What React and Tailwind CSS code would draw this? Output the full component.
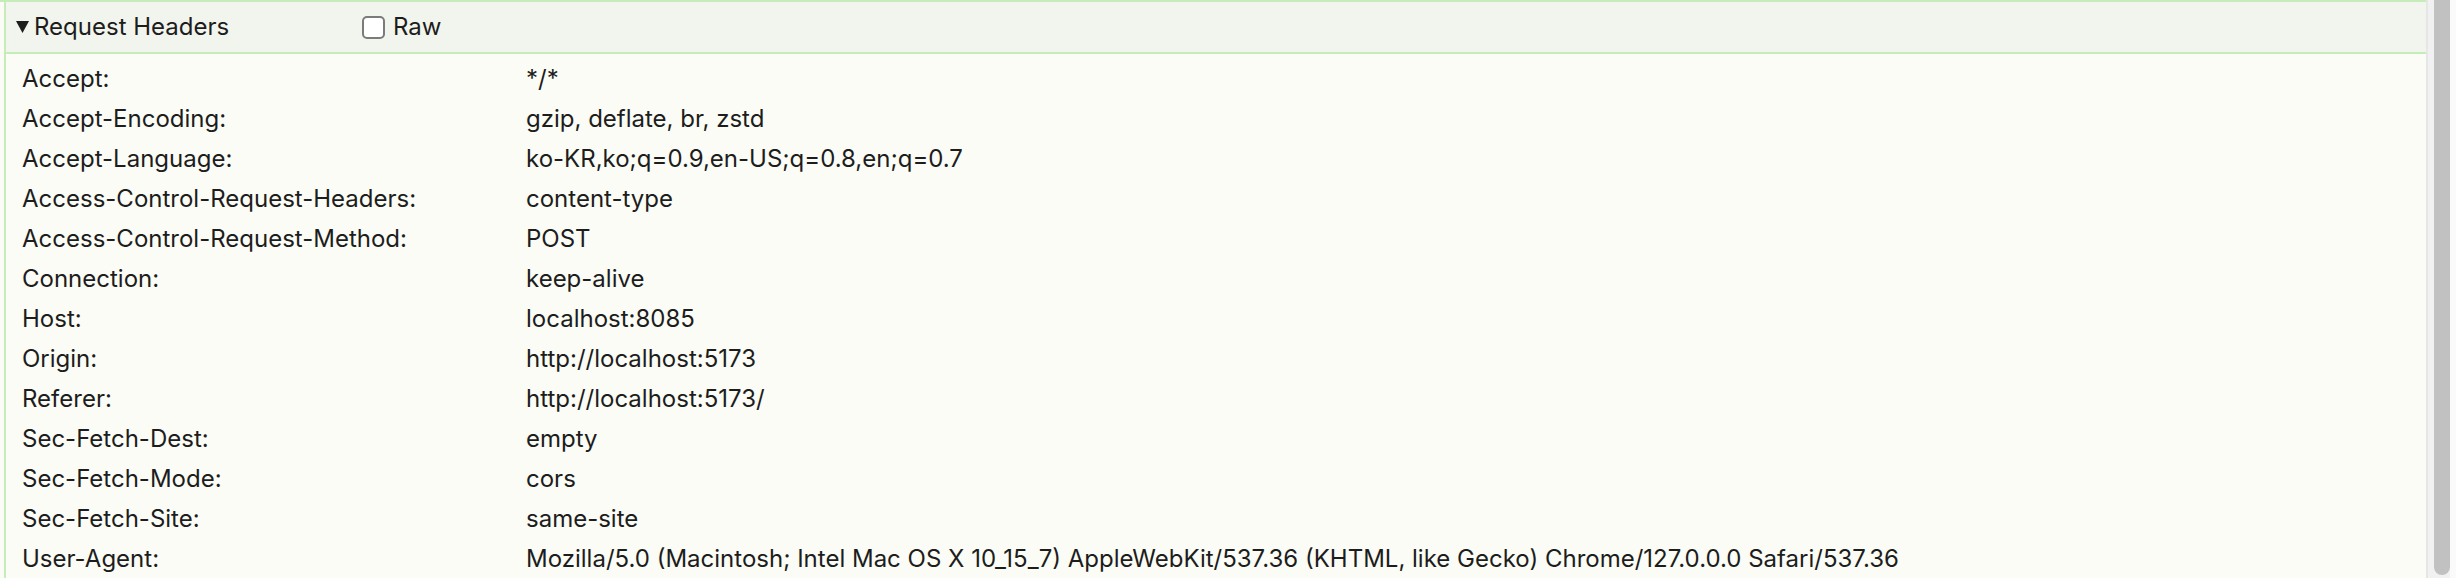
import { useState } from "react";

const HEADERS = [
  ["Accept:", "*/*"],
  ["Accept-Encoding:", "gzip, deflate, br, zstd"],
  ["Accept-Language:", "ko-KR,ko;q=0.9,en-US;q=0.8,en;q=0.7"],
  ["Access-Control-Request-Headers:", "content-type"],
  ["Access-Control-Request-Method:", "POST"],
  ["Connection:", "keep-alive"],
  ["Host:", "localhost:8085"],
  ["Origin:", "http://localhost:5173"],
  ["Referer:", "http://localhost:5173/"],
  ["Sec-Fetch-Dest:", "empty"],
  ["Sec-Fetch-Mode:", "cors"],
  ["Sec-Fetch-Site:", "same-site"],
  [
    "User-Agent:",
    "Mozilla/5.0 (Macintosh; Intel Mac OS X 10_15_7) AppleWebKit/537.36 (KHTML, like Gecko) Chrome/127.0.0.0 Safari/537.36",
  ],
];

export default function App() {
  const [raw, setRaw] = useState(false);

  return (
    <div
      className="flex h-[578px] w-full overflow-hidden bg-[#fbfcf5] text-[24px] text-[#1d1d1d]"
      style={{ fontFamily: "Inter, 'Liberation Sans', sans-serif" }}
    >
      {/* panel */}
      <div className="flex-1 border-t-2 border-[#c5ecb9] pl-[4px]">
        <div className="h-full border-l-2 border-[#c5ecb9]">
          {/* header bar */}
          <div className="flex h-[52px] items-center border-b-2 border-[#c5ecb9] bg-[#f2f5ed] pl-[10px]">
            <svg width="13" height="12" viewBox="0 0 13 12" className="mr-[5px]">
              <path d="M0 0 H13 L6.5 12 Z" fill="#1d1d1d" />
            </svg>
            <span className="w-[328px] leading-none">Request Headers</span>
            <button
              onClick={() => setRaw(!raw)}
              className="mr-[8px] h-[23px] w-[23px] rounded-[5px] border-2 border-[#7b7b7b] bg-white"
            />
            <span className="leading-none">Raw</span>
          </div>

          {/* rows */}
          <div className="pt-[5px]">
            {HEADERS.map(([k, v]) => (
              <div key={k} className="flex h-[40px] items-center whitespace-nowrap">
                <div className="w-[520px] shrink-0 pl-[16px]">{k}</div>
                <div>{v}</div>
              </div>
            ))}
          </div>
        </div>
      </div>

      {/* scrollbar */}
      <div className="flex w-[30px] shrink-0 border-l-2 border-[#e6e6e6] bg-[#f1f1f1]">
        <div className="ml-[6px] mb-[3px] w-[16px] rounded-b-[8px] bg-[#c1c1c1]" />
        <div className="flex-1 bg-[#fafafa]" />
      </div>
    </div>
  );
}
